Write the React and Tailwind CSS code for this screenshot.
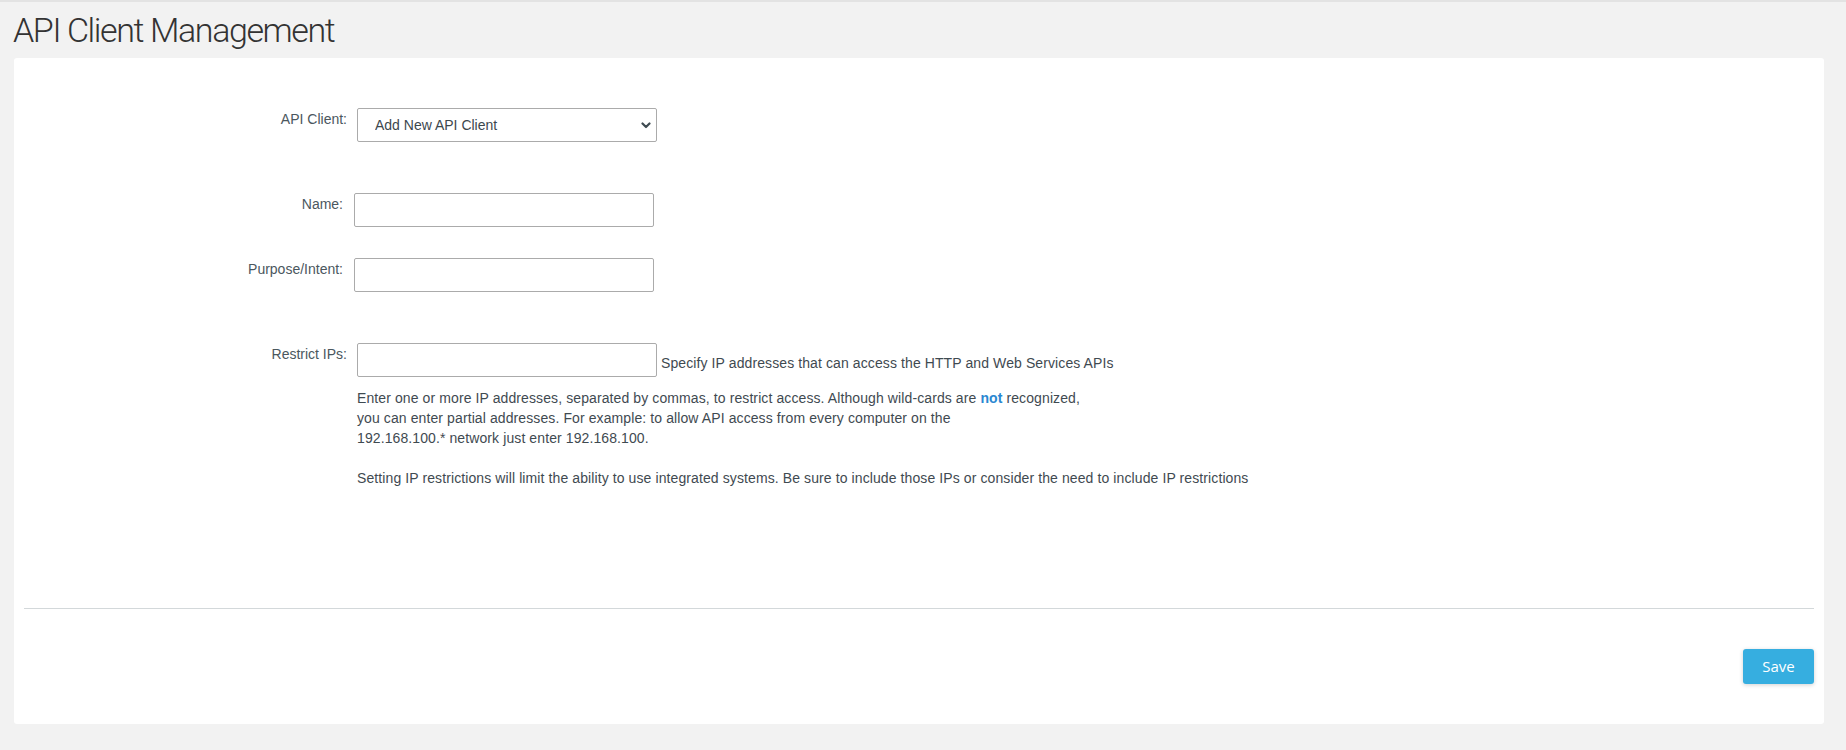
import React from 'react';

const FieldRow = ({label, labelW, gap, children, className = ""}) => (
  <div className={`flex items-start ${className}`}>
    <label className={`${labelW} ${gap} shrink-0 text-right text-[14px] leading-[20px] pt-[1px] text-[#4b575e]`}>{label}</label>
    {children}
  </div>
);

const App = () => {
  return (
    <div className="min-h-screen bg-[#f2f2f2] border-t-2 border-[#e3e3e3] font-['Liberation_Sans',Arial,sans-serif]">
      <h1 className="pl-[13px] h-[56px] leading-[56px] text-[34px] font-light text-[#333] font-['Roboto',sans-serif] tracking-[-1.4px]">
        API Client Management
      </h1>

      <div className="ml-[14px] mr-[22px] bg-white rounded-[3px] flex flex-col h-[666px]">
        <div className="flex-1 pt-[50px]">
          <FieldRow label="API Client:" labelW="w-[333px]" gap="mr-[10px]">
            <div className="relative w-[300px] h-[34px]">
              <select
                defaultValue="new"
                className="appearance-none w-full h-full border border-[#ababab] rounded-[2px] bg-white pl-[17px] font-['Liberation_Sans',Arial,sans-serif] text-[14px] text-[#3c474e] outline-none"
              >
                <option value="new">Add New API Client</option>
              </select>
              <svg className="absolute right-[6px] top-[14px] pointer-events-none" width="10" height="7" viewBox="0 0 10 7">
                <path d="M1.5 1.5 L5 5 L8.5 1.5" fill="none" stroke="#3f4b52" strokeWidth="2.2" strokeLinecap="round" strokeLinejoin="round"/>
              </svg>
            </div>
          </FieldRow>

          <FieldRow label="Name:" labelW="w-[329px]" gap="mr-[11px]" className="mt-[51px]">
            <input type="text" className="w-[300px] h-[34px] border border-[#ababab] rounded-[2px] outline-none px-2 text-[14px]" />
          </FieldRow>

          <FieldRow label="Purpose/Intent:" labelW="w-[329px]" gap="mr-[11px]" className="mt-[31px]">
            <input type="text" className="w-[300px] h-[34px] border border-[#ababab] rounded-[2px] outline-none px-2 text-[14px]" />
          </FieldRow>

          <FieldRow label="Restrict IPs:" labelW="w-[333px]" gap="mr-[10px]" className="mt-[51px]">
            <div className="flex flex-col">
              <div className="flex items-end">
                <input type="text" className="w-[300px] h-[34px] border border-[#ababab] rounded-[2px] outline-none px-2 text-[14px]" />
                <span className="ml-[4px] text-[14px] leading-[16px] mb-[6px] tracking-[0.1px] text-[#3f4a51]">
                  Specify IP addresses that can access the HTTP and Web Services APIs
                </span>
              </div>
              <p className="mt-[11px] text-[14px] leading-[20px] tracking-[0.1px] text-[#3f4a51]">
                Enter one or more IP addresses, separated by commas, to restrict access. Although wild-cards are{" "}
                <b className="text-[#2a87d1]">not</b> recognized,
                <br />
                you can enter partial addresses. For example: to allow API access from every computer on the
                <br />
                192.168.100.* network just enter 192.168.100.
                <br />
                <br />
                Setting IP restrictions will limit the ability to use integrated systems. Be sure to include those IPs or consider the need to include IP restrictions
              </p>
            </div>
          </FieldRow>
        </div>

        <div className="mx-[10px] h-px bg-[#d3d8da]" />

        <div className="flex justify-end px-[10px] py-[40px]">
          <button className="w-[71px] h-[35px] rounded-[3px] bg-[#36aee0] text-white text-[15px] font-['Open_Sans',sans-serif] shadow-[0_1px_4px_rgba(0,0,0,0.18)]">
            Save
          </button>
        </div>
      </div>
    </div>
  );
};

export default App;
